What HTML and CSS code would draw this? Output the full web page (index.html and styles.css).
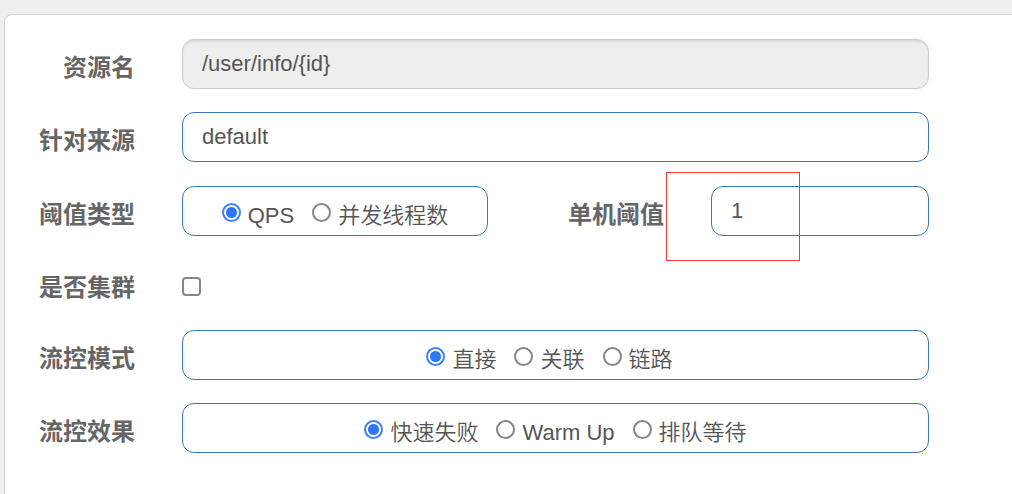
FILE: index.html
```html
<!DOCTYPE html>
<html lang="zh-CN">
<head>
<meta charset="utf-8">
<meta name="viewport" content="width=device-width, initial-scale=1">
<title>流控规则</title>
<link rel="stylesheet" href="styles.css">
</head>
<body>
<main class="panel">
  <form class="form">
    <div class="row">
      <label class="label" for="resource">资源名</label>
      <input class="field field-disabled" id="resource" type="text" value="/user/info/{id}" readonly>
    </div>
    <div class="row">
      <label class="label" for="origin">针对来源</label>
      <input class="field" id="origin" type="text" value="default">
    </div>
    <div class="row row-threshold">
      <span class="label" id="grade-label">阈值类型</span>
      <div class="field options" role="radiogroup" aria-labelledby="grade-label">
        <label class="option"><input class="radio" type="radio" name="grade" checked><span class="option-text">QPS</span></label>
        <label class="option"><input class="radio" type="radio" name="grade"><span class="option-text">并发线程数</span></label>
      </div>
      <label class="label" for="count">单机阈值</label>
      <div class="count">
        <input class="field" id="count" type="text" value="1">
        <div class="marker"></div>
      </div>
    </div>
    <div class="row row-check">
      <label class="label" for="cluster">是否集群</label>
      <input class="checkbox" id="cluster" type="checkbox">
    </div>
    <div class="row">
      <span class="label" id="mode-label">流控模式</span>
      <div class="field options options-mode" role="radiogroup" aria-labelledby="mode-label">
        <label class="option"><input class="radio" type="radio" name="mode" checked><span class="option-text">直接</span></label>
        <label class="option"><input class="radio" type="radio" name="mode"><span class="option-text">关联</span></label>
        <label class="option"><input class="radio" type="radio" name="mode"><span class="option-text">链路</span></label>
      </div>
    </div>
    <div class="row">
      <span class="label" id="effect-label">流控效果</span>
      <div class="field options" role="radiogroup" aria-labelledby="effect-label">
        <label class="option"><input class="radio" type="radio" name="effect" checked><span class="option-text">快速失败</span></label>
        <label class="option"><input class="radio" type="radio" name="effect"><span class="option-text">Warm Up</span></label>
        <label class="option"><input class="radio" type="radio" name="effect"><span class="option-text">排队等待</span></label>
      </div>
    </div>
  </form>
</main>
</body>
</html>
```

FILE: styles.css
```css
* {
  box-sizing: border-box;
}

body {
  margin: 0;
  padding: 14px 0 0 4px;
  min-height: 100vh;
  display: flex;
  background: #efefef;
  color: #555;
  font-family: "Liberation Sans", "Noto Sans CJK SC", sans-serif;
  font-size: 22px;
  line-height: 32px;
}

.panel {
  flex: 1;
  border: 1px solid #d3d3d3;
  border-width: 1px 0 0 1px;
  border-radius: 8px 0 0 0;
  background: #fff;
}

.form {
  display: flex;
  flex-direction: column;
  gap: 23px;
  padding: 24px 83px 24px 0;
}

.row {
  display: grid;
  grid-template-columns: 130px minmax(0, 1fr);
  column-gap: 47px;
  align-items: center;
}

.row-threshold {
  grid-template-columns: 130px minmax(0, 306fr) 129px minmax(0, 218fr);
  margin-top: 1px;
}

.row-check {
  height: 48px;
  padding-top: 6px;
}

.label {
  padding-top: 7px;
  color: #666;
  font-size: 24px;
  font-weight: 700;
  text-align: right;
  white-space: nowrap;
}

.row-check .label {
  padding-top: 4px;
}

.field {
  width: 100%;
  height: 50px;
  padding: 0 19px;
  border: 1px solid #3c78b8;
  border-radius: 12px;
  background: #fff;
  color: #555;
  font: inherit;
  outline: 0;
}

.field-disabled {
  border-color: #ccc;
  background: #eee;
  box-shadow: inset 0 2px 2px rgba(0, 0, 0, 0.08);
}

.options {
  display: flex;
  align-items: center;
  justify-content: center;
  gap: 18px;
  padding-top: 2px;
}

.options-mode {
  padding-right: 31px;
}

.option {
  display: flex;
  align-items: center;
  gap: 7px;
  font-weight: 350;
  white-space: nowrap;
}

.option-text {
  padding-top: 7px;
}

.radio,
.checkbox {
  appearance: none;
  width: 19px;
  height: 19px;
  margin: 0;
  border: 2px solid #868686;
  background: #fff;
}

.radio {
  border-radius: 50%;
}

.radio:checked {
  border-color: #3f80ff;
  background: radial-gradient(circle, #2f75ff 5px, #fff 6px);
}

.checkbox {
  border-radius: 4px;
}

.checkbox:checked {
  border-color: #2f75ff;
  background: #2f75ff;
}

.count {
  position: relative;
}

.marker {
  position: absolute;
  top: -14px;
  left: -45px;
  width: 134px;
  height: 89px;
  border: 1px solid #f93a3a;
  pointer-events: none;
}
```
